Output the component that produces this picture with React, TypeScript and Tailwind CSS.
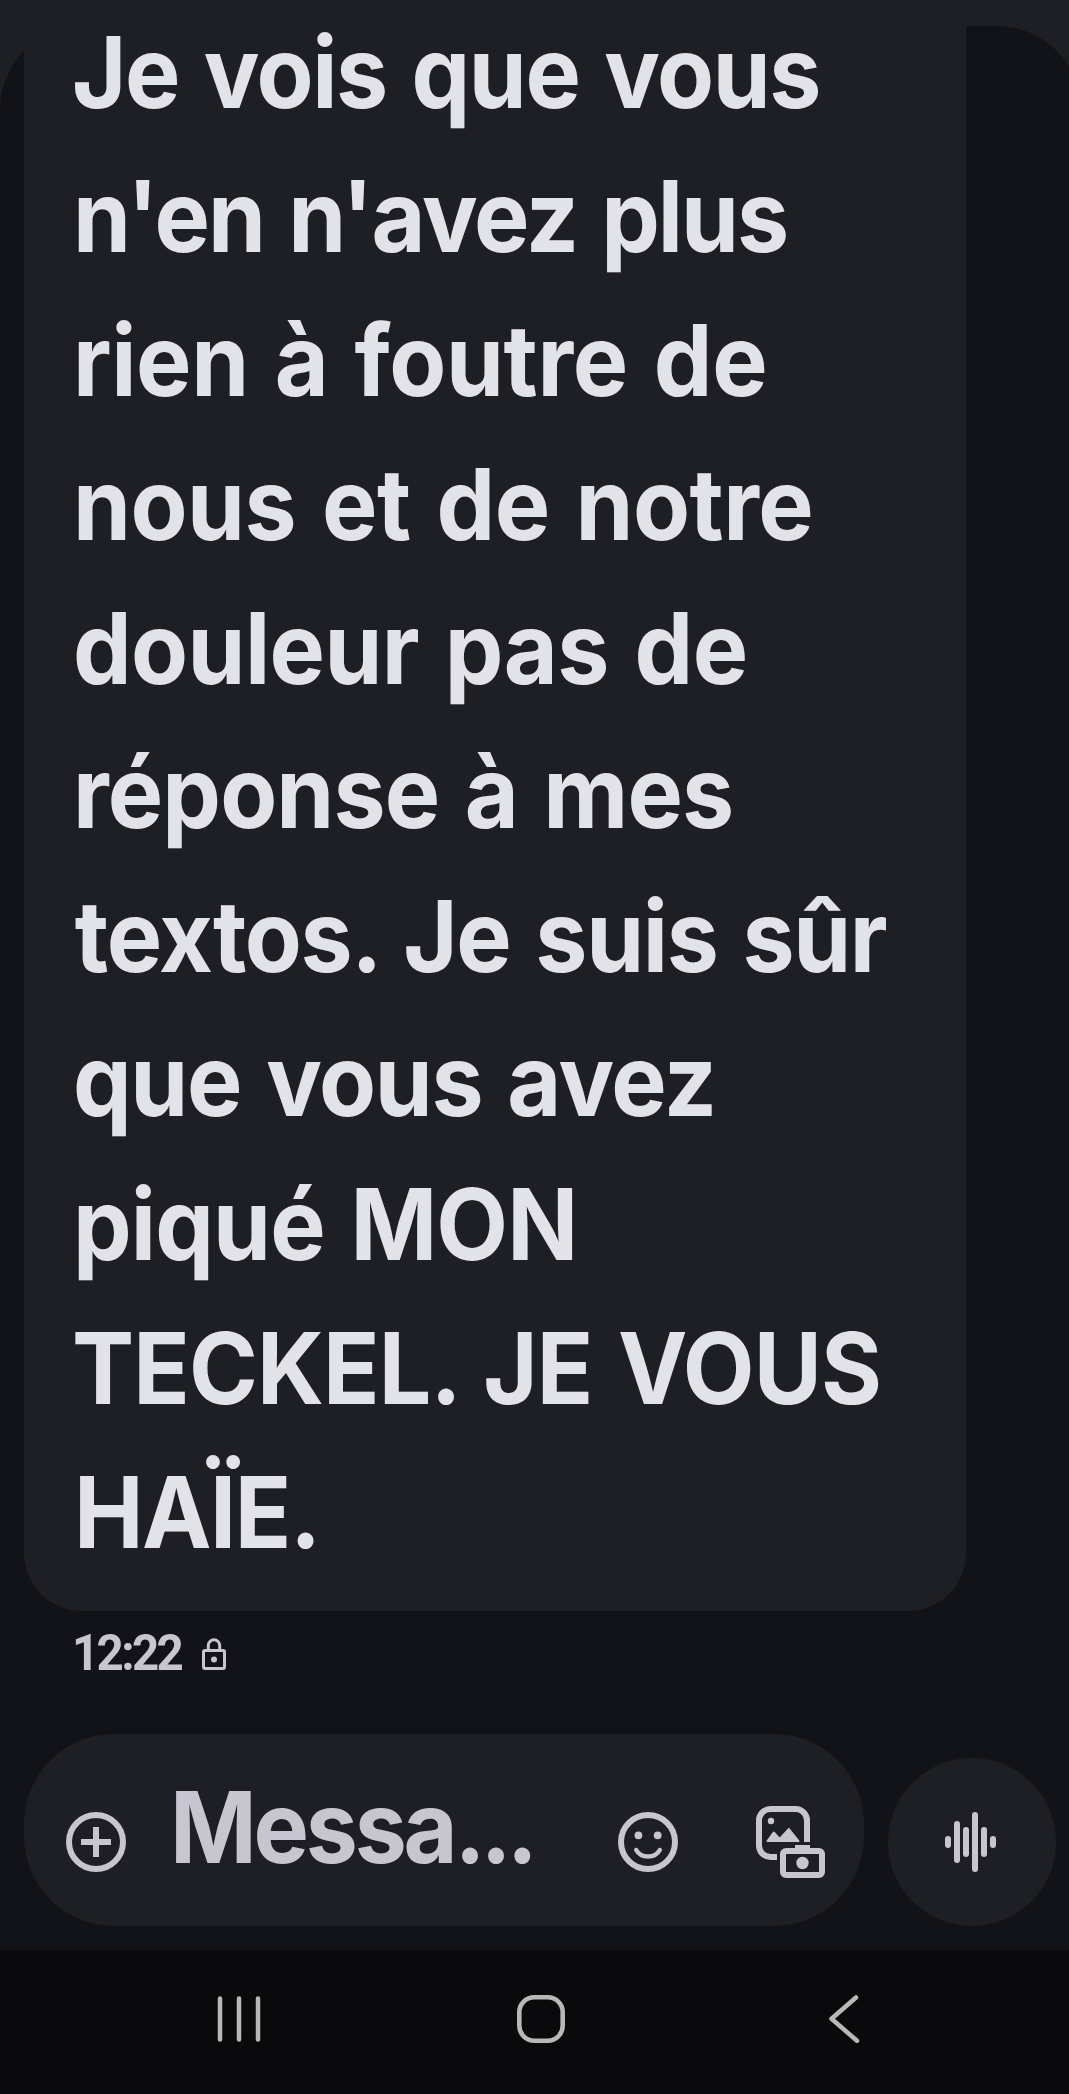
type MessageLine = {
  text: string
  className: string
}

const messageLines: MessageLine[] = [
  { text: 'Je vois que vous', className: 'tracking-[-1.5px]' },
  { text: "n'en n'avez plus", className: 'tracking-[-2.15px] pl-px' },
  { text: 'rien à foutre de', className: 'tracking-[-0.33px] pl-px' },
  { text: 'nous et de notre', className: 'tracking-[-0.48px] pl-px' },
  { text: 'douleur pas de', className: 'tracking-[-0.6px] pl-px' },
  { text: 'réponse à mes', className: 'tracking-[-0.9px] pl-px' },
  { text: 'textos. Je suis sûr', className: 'tracking-[-1.4px] pl-[3px]' },
  { text: 'que vous avez', className: 'tracking-[-1.35px] pl-px' },
  { text: 'piqué MON', className: 'tracking-[-0.84px] pl-px' },
  { text: 'TECKEL. JE VOUS', className: 'tracking-[-0.9px]' },
  { text: 'HAÏE.', className: 'tracking-[-1.5px] pl-0.5' },
]

const waveBars = [
  { x: 3, half: 6 },
  { x: 12, half: 21 },
  { x: 21, half: 15 },
  { x: 30, half: 30 },
  { x: 39, half: 15 },
  { x: 48, half: 6 },
]

function LockIcon() {
  return (
    <svg viewBox="0 0 24 32" className="mt-[15px] h-8 w-6" fill="none" stroke="currentColor" strokeWidth="3">
      <rect x="1.5" y="12.5" width="21" height="18" rx="1.5" />
      <path d="M6.3 12V7.5a5.7 5.7 0 0 1 11.4 0V12" />
      <circle cx="12" cy="21.5" r="3" fill="currentColor" stroke="none" />
    </svg>
  )
}

function PlusIcon() {
  return (
    <svg viewBox="0 0 60 60" className="mt-[78px] size-[60px] shrink-0" fill="none" stroke="currentColor" strokeWidth="6">
      <circle cx="30" cy="30" r="27" />
      <path d="M30 15v30M15 30h30" />
    </svg>
  )
}

function SmileyIcon() {
  return (
    <svg viewBox="0 0 60 60" className="mt-[78px] size-[60px] shrink-0" fill="none" stroke="currentColor">
      <circle cx="30" cy="30" r="27" strokeWidth="6" />
      <circle cx="20.4" cy="23.3" r="3.9" fill="currentColor" stroke="none" />
      <circle cx="39.7" cy="23.3" r="3.9" fill="currentColor" stroke="none" />
      <path d="M18.2 38C23 46.7 37 46.7 41.8 38" strokeWidth="4.4" strokeLinecap="round" />
    </svg>
  )
}

function GalleryIcon() {
  return (
    <svg viewBox="0 0 72 72" className="mt-[72px] mr-9 ml-[78px] size-[72px] shrink-0" fill="none" stroke="currentColor" strokeWidth="6">
      <path d="M21 51H14.5A11.5 11.5 0 0 1 3 39.5V14.5A11.5 11.5 0 0 1 14.5 3H39.5A11.5 11.5 0 0 1 51 14.5V36" />
      <circle cx="15" cy="15" r="3.2" fill="currentColor" stroke="none" />
      <path d="M11.5 35l6.2-8.5 6 6.5 9.2-10 9.6 12z" fill="currentColor" strokeWidth="2" strokeLinejoin="round" />
      <rect x="27" y="45" width="39" height="24" rx="3" />
      <path d="M39 39h15v4H39z" fill="currentColor" stroke="none" />
      <circle cx="46.5" cy="57" r="6.2" fill="currentColor" stroke="none" />
    </svg>
  )
}

function WaveIcon() {
  return (
    <svg viewBox="0 0 51 60" className="mr-[3px] h-[60px] w-[51px]" fill="currentColor">
      {waveBars.map((bar) => (
        <rect key={bar.x} x={bar.x - 3} y={30 - bar.half} width="6" height={bar.half * 2} rx="3" />
      ))}
    </svg>
  )
}

function NavigationBar() {
  return (
    <nav className="flex h-36 items-start bg-[#0a0a0c] pt-[45px] text-[#b8b8b8]">
      <svg viewBox="0 0 44 48" className="ml-[217px] h-12 w-11" stroke="currentColor" strokeWidth="4.5" strokeLinecap="round">
        <path d="M3 3.5v41M22 3.5v41M41 3.5v41" />
      </svg>
      <svg viewBox="0 0 48 48" className="ml-64 size-12" fill="none" stroke="currentColor" strokeWidth="4.6">
        <rect x="2.3" y="2.3" width="43.4" height="43.4" rx="15" />
      </svg>
      <svg viewBox="0 0 32 48" className="ml-[263px] h-12 w-8" fill="none" stroke="currentColor" strokeWidth="4.5" strokeLinecap="round" strokeLinejoin="round">
        <path d="M28 2.5L3.5 23.7L29 45.8" />
      </svg>
    </nav>
  )
}

export default function App() {
  return (
    <div className="h-[2094px] w-[1069px] overflow-hidden bg-[#1e1f24] pt-[26px] font-['Inter','Liberation_Sans',sans-serif] font-[660]">
      {/* The sheet runs slightly past the right edge of the screen */}
      <main className="flex h-[1924px] w-[1081px] flex-col rounded-t-[84px] bg-[#121318]">
        <div className="ml-6 flow-root h-[1585px] w-[942px] shrink-0 rounded-b-[58px] bg-[#1e1f24] pl-12">
          <p className="-mt-[26px] origin-left scale-x-[0.94] text-[99px] leading-[144px] whitespace-nowrap text-[#e2e2e9] [word-spacing:4.5px]">
            {messageLines.map((line) => (
              <span key={line.text} className={`block ${line.className}`}>
                {line.text}
              </span>
            ))}
          </p>
        </div>

        <div className="mt-3 flex h-[111px] items-start pl-[72px] text-[#c6c5d0]">
          <time className="w-[130px] origin-left scale-x-95 font-['Roboto',sans-serif] text-[50px] leading-[60px] font-bold tracking-[-2.8px]">
            12:22
          </time>
          <LockIcon />
        </div>

        <div className="flex h-[192px] items-end gap-6 pl-6 text-[#c6c5d0]">
          <div className="flex h-[192px] w-[840px] items-start rounded-[90px] bg-[#1e1f24] pl-[42px]">
            <PlusIcon />
            <span className="mt-[21px] ml-11 w-[448px] origin-left scale-x-[0.94] text-[99px] leading-[144px] tracking-[-3.4px] whitespace-nowrap">
              Messa<span className="tracking-[-5.2px]">...</span>
            </span>
            <SmileyIcon />
            <GalleryIcon />
          </div>
          <button className="flex size-[168px] items-center justify-center rounded-full bg-[#1e1f24]">
            <WaveIcon />
          </button>
        </div>
      </main>
      <NavigationBar />
    </div>
  )
}
